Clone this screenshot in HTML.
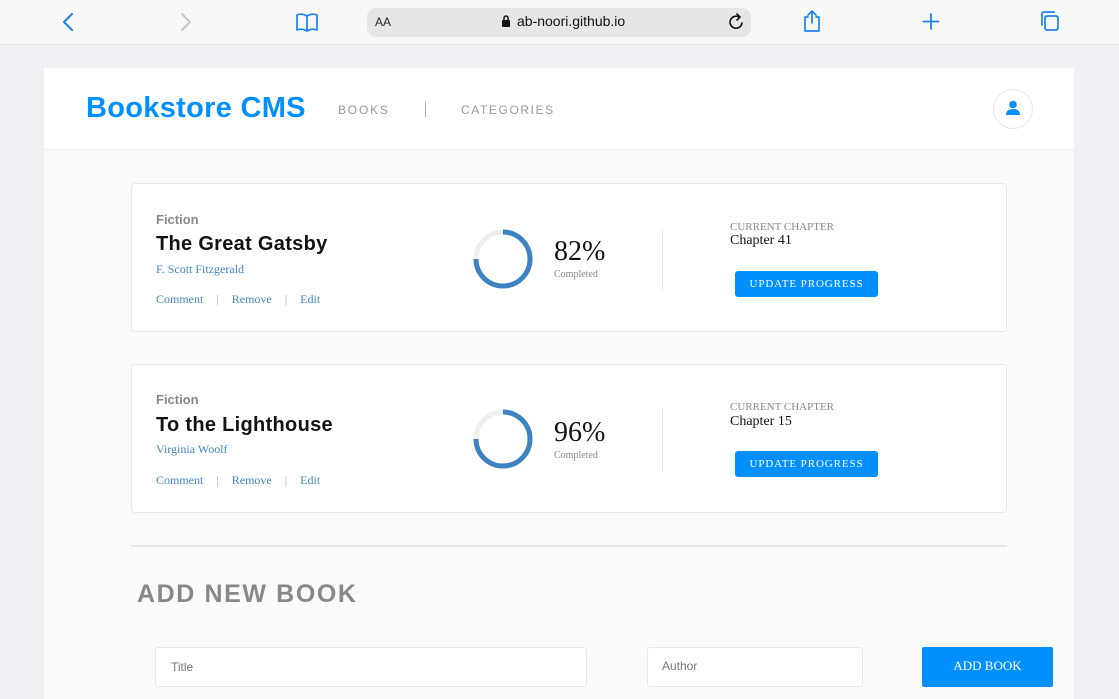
<!DOCTYPE html>
<html><head><meta charset="utf-8"><style>
*{box-sizing:border-box;margin:0;padding:0}
body{width:1119px;height:699px;overflow:hidden;background:#f0f1f5;position:relative;font-family:"Liberation Sans",sans-serif}
.abs{position:absolute}
.bar{left:0;top:0;width:1119px;height:45px;background:#f8f8f8;border-bottom:1px solid #e4e4e4}
.url{left:367px;top:8px;width:384px;height:29px;background:#e6e6e6;border-radius:9px}
.wrap{left:44px;top:68px;width:1030px;height:631px;background:#fafafa}
.hdr{left:44px;top:68px;width:1030px;height:82px;background:#fff;border-bottom:1px solid #eee}
.card{left:131px;width:876px;height:149px;background:#fff;border:1px solid #e8e8e8;border-radius:4px}
.serif{font-family:"Liberation Serif",serif}
.btn{background:#0290ff;color:#fff;border-radius:3px;text-align:center;font-family:"Liberation Serif",serif}
</style></head><body>
<div class="abs bar"></div>
<svg class="abs" style="left:0;top:0" width="1119" height="45" fill="none" stroke-linecap="round" stroke-linejoin="round">
<path d="M72 14 L64 22 L72 30" stroke="#1a82f0" stroke-width="2"/>
<path d="M182 14 L190 22 L182 30" stroke="#c8c8c8" stroke-width="2"/>
<path d="M297 15 Q302 13 307 16 Q312 13 317 15 L317 30 Q312 28 307 31 Q302 28 297 30 Z M307 16 L307 31" stroke="#1a82f0" stroke-width="1.7"/>
<path d="M808 17 H805 V31 H819 V17 H816 M812 11 V23 M808 15 L812 11 L816 15" stroke="#1a82f0" stroke-width="1.7"/>
<path d="M931 14 V29 M923.5 21.5 H938.5" stroke="#1a82f0" stroke-width="1.8"/>
<rect x="1045" y="16" width="13" height="14" rx="2" stroke="#1a82f0" stroke-width="1.7"/>
<path d="M1042 25 V14 Q1042 12 1044 12 H1054" stroke="#1a82f0" stroke-width="1.7"/>
</svg>
<div class="abs url"></div>
<div class="abs" style="left:375px;top:15px;font-size:12px;color:#222">AA</div>
<svg class="abs" style="left:501px;top:14px" width="10" height="14"><rect x="1" y="6" width="8" height="7" rx="1" fill="#111"/><path d="M3 6 V4 A2 2 0 0 1 7 4 V6" stroke="#111" stroke-width="1.5" fill="none"/></svg>
<div class="abs" style="left:517px;top:13px;font-size:14px;color:#111">ab-noori.github.io</div>
<svg class="abs" style="left:728px;top:12px" width="18" height="20" fill="none"><path d="M14 11 A6 6 0 1 1 11 5 M9 2 L12 5 L9 8" stroke="#111" stroke-width="1.6" stroke-linecap="round"/></svg>

<div class="abs wrap"></div>
<div class="abs hdr"></div>
<div class="abs" style="left:86px;top:92px;font-size:29px;font-weight:bold;color:#0290ff;letter-spacing:0.3px">Bookstore CMS</div>
<div class="abs" style="left:338px;top:103px;font-size:12px;color:#999;letter-spacing:1.8px">BOOKS</div>
<div class="abs" style="left:425px;top:102px;width:1px;height:15px;background:#aab"></div>
<div class="abs" style="left:461px;top:103px;font-size:12px;color:#999;letter-spacing:1.6px">CATEGORIES</div>
<div class="abs" style="left:993px;top:89px;width:40px;height:40px;border-radius:50%;border:1px solid #e8e8e8;background:#fff"></div>
<svg class="abs" style="left:1004px;top:99px" width="18" height="18"><circle cx="9" cy="5.5" r="3.8" fill="#0290ff"/><path d="M2 16 Q2 10 9 10 Q16 10 16 16 Z" fill="#0290ff"/></svg>

<!-- card 1 -->
<div class="abs card" style="top:183px"></div>
<div class="abs" style="left:156px;top:212px;font-size:13px;font-weight:bold;color:#888">Fiction</div>
<div class="abs" style="left:156px;top:233px;font-size:20px;font-weight:bold;color:#121212;letter-spacing:0.3px">The Great Gatsby</div>
<div class="abs serif" style="left:156px;top:262px;font-size:12px;color:#4386bf">F. Scott Fitzgerald</div>
<div class="abs serif" style="left:156px;top:292px;font-size:12px;color:#4386bf">Comment<span style="color:#aab;margin:0 13px">|</span>Remove<span style="color:#aab;margin:0 13px">|</span>Edit</div>
<svg class="abs" style="left:471px;top:227px" width="64" height="64"><circle cx="32" cy="32" r="27" stroke="#eee" stroke-width="5" fill="none"/><circle cx="32" cy="32" r="27" stroke="#3d83c1" stroke-width="5" fill="none" stroke-dasharray="127 200" transform="rotate(-90 32 32)"/></svg>
<div class="abs serif" style="left:554px;top:236px;font-size:28px;color:#121212">82%</div>
<div class="abs serif" style="left:554px;top:269px;font-size:10px;color:#888">Completed</div>
<div class="abs" style="left:662px;top:228px;width:1px;height:62px;background:#e8e8e8"></div>
<div class="abs serif" style="left:730px;top:221px;font-size:11px;color:#888">CURRENT CHAPTER</div>
<div class="abs serif" style="left:730px;top:233px;font-size:14px;color:#121212">Chapter 41</div>
<div class="abs btn" style="left:735px;top:271px;width:143px;height:26px;line-height:26px;font-size:11px;letter-spacing:0.9px">UPDATE PROGRESS</div>

<!-- card 2 -->
<div class="abs card" style="top:364px"></div>
<div class="abs" style="left:156px;top:392px;font-size:13px;font-weight:bold;color:#888">Fiction</div>
<div class="abs" style="left:156px;top:414px;font-size:20px;font-weight:bold;color:#121212;letter-spacing:0.3px">To the Lighthouse</div>
<div class="abs serif" style="left:156px;top:442px;font-size:12px;color:#4386bf">Virginia Woolf</div>
<div class="abs serif" style="left:156px;top:473px;font-size:12px;color:#4386bf">Comment<span style="color:#aab;margin:0 13px">|</span>Remove<span style="color:#aab;margin:0 13px">|</span>Edit</div>
<svg class="abs" style="left:471px;top:407px" width="64" height="64"><circle cx="32" cy="32" r="27" stroke="#eee" stroke-width="5" fill="none"/><circle cx="32" cy="32" r="27" stroke="#3d83c1" stroke-width="5" fill="none" stroke-dasharray="127 200" transform="rotate(-90 32 32)"/></svg>
<div class="abs serif" style="left:554px;top:417px;font-size:28px;color:#121212">96%</div>
<div class="abs serif" style="left:554px;top:450px;font-size:10px;color:#888">Completed</div>
<div class="abs" style="left:662px;top:409px;width:1px;height:62px;background:#e8e8e8"></div>
<div class="abs serif" style="left:730px;top:401px;font-size:11px;color:#888">CURRENT CHAPTER</div>
<div class="abs serif" style="left:730px;top:414px;font-size:14px;color:#121212">Chapter 15</div>
<div class="abs btn" style="left:735px;top:451px;width:143px;height:26px;line-height:26px;font-size:11px;letter-spacing:0.9px">UPDATE PROGRESS</div>

<div class="abs" style="left:131px;top:545px;width:876px;height:2px;background:#e8e8e8"></div>
<div class="abs" style="left:137px;top:580px;font-size:25px;font-weight:bold;color:#888;letter-spacing:1.6px">ADD NEW BOOK</div>
<div class="abs" style="left:155px;top:647px;width:432px;height:40px;background:#fff;border:1px solid #e8e8e8;border-radius:3px;font-size:12px;color:#777;padding:12px 0 0 15px">Title</div>
<div class="abs" style="left:647px;top:647px;width:216px;height:40px;background:#fff;border:1px solid #e8e8e8;border-radius:3px;font-size:12px;color:#777;padding:11px 0 0 14px">Author</div>
<div class="abs btn" style="left:922px;top:647px;width:131px;height:40px;line-height:38px;font-size:13px;border-radius:2px">ADD BOOK</div>
</body></html>
